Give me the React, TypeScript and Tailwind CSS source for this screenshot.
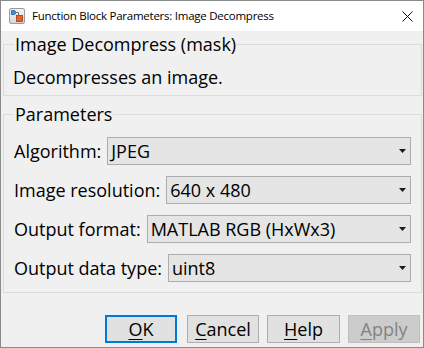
import React from "react";

function BlockIcon() {
  return (
    <svg width="16" height="16" viewBox="0 0 16 16">
      <defs>
        <linearGradient id="bg" x1="0" y1="0" x2="0" y2="1">
          <stop offset="0" stopColor="#f4f4f4" />
          <stop offset="1" stopColor="#d6d6d6" />
        </linearGradient>
      </defs>
      <rect x="0.5" y="0.5" width="15" height="15" rx="1.5" fill="url(#bg)" stroke="#9a9a9a" />
      <path d="M2.5 2.5h3l2 2-2 2h-3z" fill="#3d8fd6" stroke="#1f5f9e" strokeWidth="0.8" />
      <path d="M7.5 4.5h2v3" fill="none" stroke="#555" strokeWidth="0.8" />
      <rect x="7.5" y="7.5" width="6" height="6" fill="#e8622c" stroke="#a83a10" strokeWidth="0.8" />
    </svg>
  );
}

function Arrow() {
  return (
    <svg width="7" height="4" viewBox="0 0 7 4">
      <path d="M0 0h7L3.5 4z" fill="#1a1a1a" />
    </svg>
  );
}

function Combo({ label, value }: { label: string; value: string }) {
  return (
    <div className="flex items-center gap-[6px] h-[28px]">
      <span className="whitespace-nowrap">{label}</span>
      <div className="flex-1 h-[28px] flex items-center justify-between border border-[#adadad] bg-[#e5e5e5] pl-[3px] pr-[4px]">
        <span className="whitespace-nowrap">{value}</span>
        <Arrow />
      </div>
    </div>
  );
}

function Btn({
  first,
  rest,
  width,
  primary,
  disabled,
}: {
  first: string;
  rest: string;
  width: string;
  primary?: boolean;
  disabled?: boolean;
}) {
  const base = "h-[28px] flex items-center justify-center ";
  const cls = primary
    ? "border-2 border-[#0078d7] bg-[#e1e1e1] text-black"
    : disabled
    ? "border border-[#bfbfbf] bg-[#cccccc] text-[#838383]"
    : "border border-[#adadad] bg-[#e1e1e1] text-black";
  return (
    <div className={base + cls + " " + width}>
      <span>
        <span className="underline underline-offset-[3px] decoration-1">{first}</span>
        {rest}
      </span>
    </div>
  );
}

export default function App() {
  return (
    <div className="w-[424px] h-[348px] border border-[#8a8a8a] bg-[#f0f0f0] flex flex-col font-['Open_Sans','Noto_Sans',sans-serif] text-black overflow-hidden">
      <div className="h-[30px] bg-white flex items-center shrink-0">
        <div className="ml-[8px] mr-[7px] flex items-center">
          <BlockIcon />
        </div>
        <span className="flex-1 text-[11.5px] tracking-[-0.25px] leading-[16px] text-black whitespace-nowrap">
          Function Block Parameters: Image Decompress
        </span>
        <svg width="11" height="11" viewBox="0 0 11 11" className="mr-[10px]">
          <path d="M0.5 0.5L10.5 10.5M10.5 0.5L0.5 10.5" stroke="#111" strokeWidth="1" />
        </svg>
      </div>
      <div className="flex flex-col pl-[2px] pr-[1px] text-[18px] leading-[24px]">
        <fieldset className="mt-[1px] border border-[#dcdcdc] px-[10px] pt-[9px] pb-[6px]">
          <legend className="px-[1px]">Image Decompress (mask)</legend>
          <div className="-ml-[1px]">Decompresses an image.</div>
        </fieldset>
        <fieldset className="mt-[6px] border border-[#dcdcdc] px-[10px] pt-[11px] pb-[10px]">
          <legend className="px-[1px]">Parameters</legend>
          <div className="flex flex-col gap-[11px]">
            <Combo label="Algorithm:" value="JPEG" />
            <Combo label="Image resolution:" value="640 x 480" />
            <Combo label="Output format:" value="MATLAB RGB (HxWx3)" />
            <Combo label="Output data type:" value="uint8" />
          </div>
        </fieldset>
        <div className="mt-[22px] flex justify-end pr-[2px]">
          <Btn first="O" rest="K" width="w-[72px]" primary />
          <div className="w-[10px]" />
          <Btn first="C" rest="ancel" width="w-[72px]" />
          <div className="w-[8px]" />
          <Btn first="H" rest="elp" width="w-[73px]" />
          <div className="w-[8px]" />
          <Btn first="A" rest="pply" width="w-[72px]" disabled />
        </div>
      </div>
    </div>
  );
}
